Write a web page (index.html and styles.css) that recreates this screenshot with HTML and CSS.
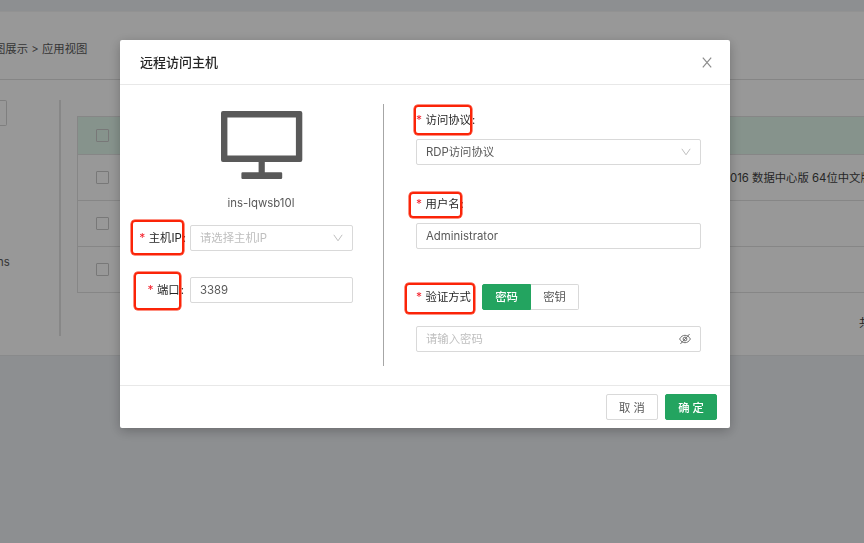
FILE: index.html
```html
<!DOCTYPE html>
<html lang="zh-CN">
<head>
<meta charset="utf-8">
<title>远程访问主机</title>
<link rel="stylesheet" href="styles.css">
</head>
<body>
<main class="page">
  <section class="panel">
    <div class="crumbs"><span class="crumbs-text">图展示 &gt; 应用视图</span></div>
    <div class="content">
      <aside class="side">
        <div class="search"></div>
        <div class="side-name">ns</div>
      </aside>
      <div class="main">
        <div class="table">
          <div class="row head"><i class="check"></i></div>
          <div class="row"><i class="check"></i><span class="os">016 数据中心版 64位中文版</span></div>
          <div class="row"><i class="check"></i></div>
          <div class="row"><i class="check"></i></div>
        </div>
        <div class="total">共</div>
      </div>
    </div>
  </section>
</main>
<div class="mask">
  <div class="modal">
    <header class="modal-head">
      <h1>远程访问主机</h1>
      <svg class="close" viewBox="0 0 10 11"><path d="M.8.7 9.2 10.3M9.2.7.8 10.3"/></svg>
    </header>
    <div class="modal-body">
      <div class="host">
        <svg class="monitor" viewBox="0 0 82 69"><path d="M2 0h77.300a2 2 0 0 1 2 2v47a2 2 0 0 1-2 2H43.800v10.200H60a1.200 1.200 0 0 1 1.200 1.200v4.400A1.200 1.200 0 0 1 60 68H21.600a1.200 1.200 0 0 1-1.200-1.200v-4.400a1.200 1.200 0 0 1 1.200-1.200H37.600V51H2a2 2 0 0 1-2-2V2a2 2 0 0 1 2-2zM6.400 6.400v38.200h68.500V6.400z" fill="#595959" fill-rule="evenodd"/></svg>
        <div class="host-name">ins-lqwsb10l</div>
        <div class="line">
          <label class="label"><b>*</b>主机IP<span class="colon">:</span></label>
          <div class="field placeholder"><span>请选择主机IP</span><svg class="arrow" viewBox="0 0 10 8"><path d="M.8.8 5 6.800 9.200.8"/></svg></div>
        </div>
        <div class="line port">
          <label class="label"><b>*</b>端口<span class="colon">:</span></label>
          <div class="field">3389</div>
        </div>
      </div>
      <div class="login">
        <label class="label"><b>*</b>访问协议<span class="colon">:</span></label>
        <div class="field protocol"><span>RDP访问协议</span><svg class="arrow" viewBox="0 0 10 8"><path d="M.8.8 5 6.800 9.200.8"/></svg></div>
        <label class="label"><b>*</b>用户名<span class="colon">:</span></label>
        <div class="field user">Administrator</div>
        <div class="verify">
          <label class="label"><b>*</b>验证方式</label>
          <div class="tabs"><span class="tab on">密码</span><span class="tab">密钥</span></div>
        </div>
        <div class="field placeholder"><span>请输入密码</span><svg class="eye" viewBox="0 0 12 12"><path d="M.6 6C2 3.500 3.800 2.300 6 2.300S10 3.500 11.400 6C10 8.500 8.200 9.700 6 9.700S2 8.500.6 6z"/><circle cx="6" cy="6" r="1.900"/><path d="M10.600 1 1.400 11"/></svg></div>
      </div>
    </div>
    <footer class="modal-foot">
      <button class="btn">取 消</button>
      <button class="btn primary">确 定</button>
    </footer>
    <i class="mark mark-ip"></i>
    <i class="mark mark-port"></i>
    <i class="mark mark-protocol"></i>
    <i class="mark mark-user"></i>
    <i class="mark mark-verify"></i>
  </div>
</div>
</body>
</html>
```
FILE: styles.css
```css
* { box-sizing: border-box; }
body {
  margin: 0;
  width: 864px;
  height: 543px;
  overflow: hidden;
  background: #ebeef2;
  color: #595959;
  font: 11.375px/16px Inter, "Noto Sans CJK SC", sans-serif;
}
.page { padding-top: 11px; }
.panel {
  height: 345px;
  background: #fdfdfd;
  border-top: 1px solid #f4f4f4;
  border-bottom: 1px solid #e4e6e8;
}
.crumbs {
  display: flex;
  align-items: center;
  height: 68px;
  padding-top: 6px;
  border-bottom: 1px solid #dedede;
}
.crumbs-text { margin-left: -6px; white-space: nowrap; }
.content { display: flex; padding-top: 20px; }
.side {
  flex: none;
  width: 61px;
  height: 236px;
  border-right: 2px solid #e2e2e2;
}
.search {
  width: 7px;
  height: 26px;
  border: 1px solid #d4d4d4;
  border-left: 0;
  border-radius: 0 2px 2px 0;
}
.side-name { margin: 128px 0 0 -3px; }
.main { flex: 1; min-width: 0; padding: 16px 0 0 16px; }
.table { border: 1px solid #e0e0e0; border-right: 0; border-bottom: 0; }
.row {
  display: flex;
  align-items: center;
  height: 46px;
  padding-left: 18px;
  border-bottom: 1px solid #e0e0e0;
}
.row.head { height: 38px; background: #e0f5ea; }
.check {
  flex: none;
  width: 13px;
  height: 13px;
  border: 1px solid #c9c9c9;
  border-radius: 1px;
}
.os { margin-left: 621px; white-space: nowrap; color: #404040; }
.total { margin: 22px 0 0 782px; color: #404040; white-space: nowrap; }

.mask {
  position: fixed;
  inset: 0;
  padding: 40px 0 0 120px;
  background: rgba(0, 0, 0, .4);
}
.modal {
  position: relative;
  width: 610px;
  height: 388px;
  background: #fff;
  border-radius: 2px;
  box-shadow: 0 3px 12px rgba(0, 0, 0, .25);
}
.modal-head {
  display: flex;
  align-items: center;
  justify-content: space-between;
  height: 45px;
  padding: 0 18px 0 20px;
  border-bottom: 1px solid #e8e8e8;
}
h1 { margin: 0 0 1px; font-size: 13px; font-weight: 500; color: #262626; }
.close { width: 10px; height: 11px; }
.close path, .arrow path, .eye { fill: none; stroke: #8c8c8c; stroke-width: 1.2; }
.modal-body { display: flex; height: 300px; padding-top: 19px; }
.host { width: 264px; height: 262px; border-right: 1px solid #a6a6a6; padding-top: 7px; }
.monitor { display: block; width: 82px; height: 69px; margin: 0 0 0 101px; }
.host-name { width: 282px; margin: 15px 0 14px; text-align: center; }
.line { display: flex; align-items: center; margin-bottom: 26px; }
.line .label { width: 70px; text-align: right; padding-right: 4px; }
.port .label { padding-right: 6px; }
.line .field { width: 163px; }
.label { display: block; height: 16px; color: #262626; white-space: nowrap; }
.label b { margin-right: 3.5px; color: #f5222d; font-weight: 400; font-size: 12px; }
.colon { margin-left: 1px; }
.field {
  display: flex;
  align-items: center;
  justify-content: space-between;
  height: 26px;
  padding: 0 9px;
  border: 1px solid #d9d9d9;
  border-radius: 2px;
}
.placeholder { color: #bfbfbf; }
.arrow { width: 10px; height: 8px; }
.arrow path { stroke: #bfbfbf; stroke-width: 1; }
.eye { width: 12px; height: 12px; stroke: #737373; stroke-width: 1; }
.login { width: 285px; margin-left: 32px; padding-top: 8px; }
.login .label { margin-bottom: 11px; }
.protocol { margin-bottom: 31px; }
.user { margin-bottom: 35px; }
.verify { display: flex; align-items: center; margin-bottom: 16px; }
.verify .label { width: 66px; margin: 0; }
.tabs { display: flex; }
.tab {
  width: 48px;
  height: 26px;
  border: 1px solid #d9d9d9;
  border-left: 0;
  border-radius: 0 2px 2px 0;
  line-height: 24px;
  text-align: center;
}
.tab.on {
  width: 49px;
  border: 1px solid #23a460;
  border-radius: 2px 0 0 2px;
  background: #23a460;
  color: #fff;
  font-weight: 500;
}
.modal-foot {
  display: flex;
  justify-content: flex-end;
  gap: 7px;
  height: 43px;
  padding: 8px 13px 0 0;
  border-top: 1px solid #e8e8e8;
}
.btn {
  width: 52px;
  height: 26px;
  padding: 1px 0 0;
  border: 1px solid #d9d9d9;
  border-radius: 2px;
  background: #fff;
  color: #595959;
  font: inherit;
}
.btn.primary { border-color: #23a460; background: #23a460; color: #fff; font-weight: 500; }

/* Callout frames over the required field labels */
.mark { position: absolute; border: 2px solid #fb2408; border-radius: 4px; box-shadow: 0 0 0 .5px #fb2408; }
.mark-ip { left: 11px; top: 180px; width: 53px; height: 35px; }
.mark-port { left: 14px; top: 232px; width: 47px; height: 38px; }
.mark-protocol { left: 294px; top: 65px; width: 58px; height: 30px; }
.mark-user { left: 289px; top: 152px; width: 53px; height: 26px; }
.mark-verify { left: 285px; top: 243px; width: 70px; height: 31px; }
```
